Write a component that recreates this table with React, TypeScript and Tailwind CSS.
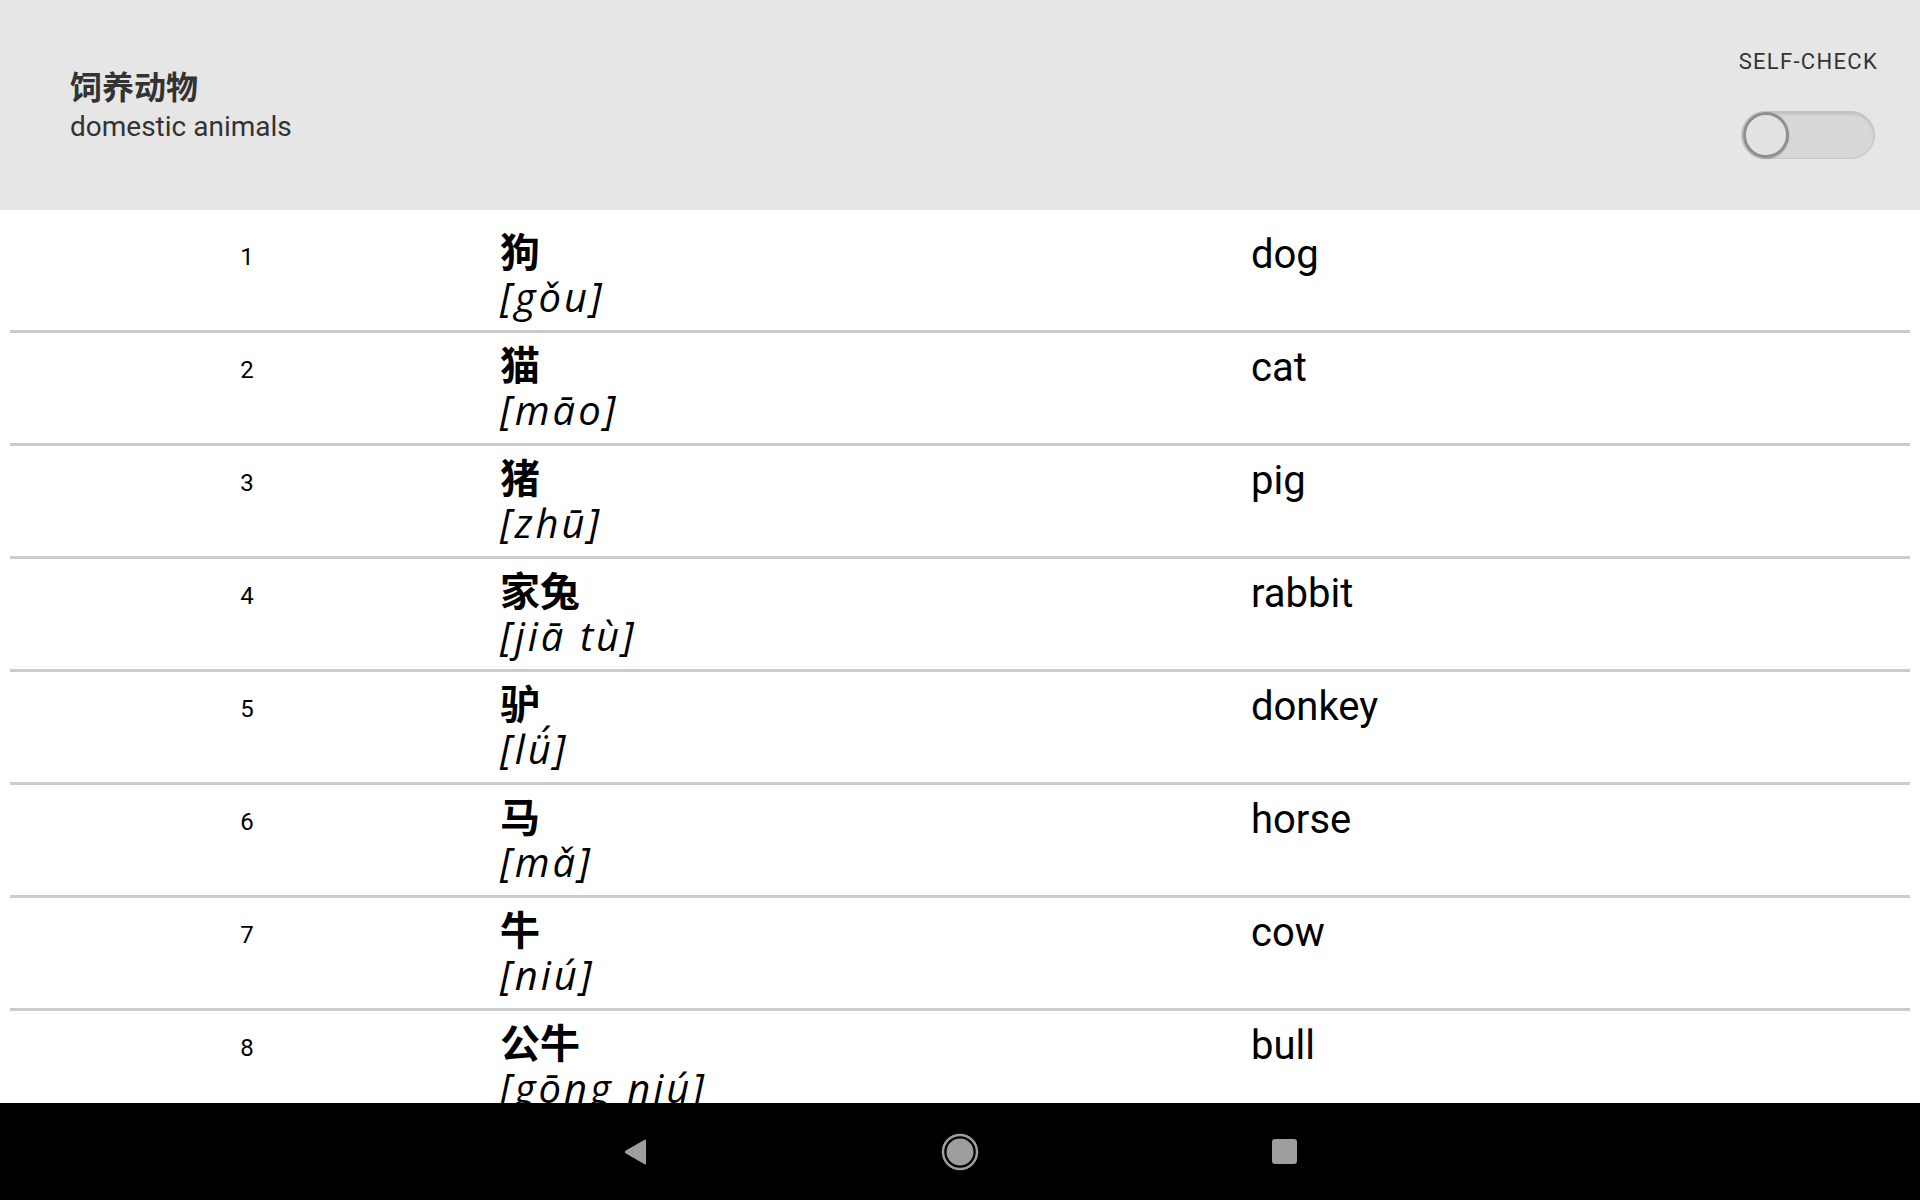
import React from 'react';

type Word = { hanzi: string; pinyin: string; english: string };

const words: Word[] = [
  { hanzi: '狗', pinyin: 'gǒu', english: 'dog' },
  { hanzi: '猫', pinyin: 'māo', english: 'cat' },
  { hanzi: '猪', pinyin: 'zhū', english: 'pig' },
  { hanzi: '家兔', pinyin: 'jiā tù', english: 'rabbit' },
  { hanzi: '驴', pinyin: 'lǘ', english: 'donkey' },
  { hanzi: '马', pinyin: 'mǎ', english: 'horse' },
  { hanzi: '牛', pinyin: 'niú', english: 'cow' },
  { hanzi: '公牛', pinyin: 'gōng niú', english: 'bull' },
];

const Toggle: React.FC = () => (
  <div className="w-[134px] h-[48px] rounded-full bg-[#d7d7d7] border border-[#c4c4c4] shadow-[inset_0_2px_3px_rgba(0,0,0,0.12)] flex items-center px-[1px]">
    <div className="w-[46px] h-[46px] rounded-full bg-[#e2e2e2] border-[3px] border-[#8f8f8f] shadow-[0_1px_2px_rgba(0,0,0,0.2)]" />
  </div>
);

const WordRow: React.FC<{ index: number; word: Word }> = ({ index, word }) => (
  <div className="border-b-[3px] border-[#cccccc]">
    <div className="grid grid-cols-[474px_751px_1fr] pt-[7px] pb-[9px]">
      <div className="text-center pt-[6px] text-[24px] leading-[48px] text-black font-['Roboto',sans-serif]">
        {index}
      </div>
      <div className="pl-[16px]">
        <div className="text-[40px] leading-[46px] font-bold text-black font-['Noto_Sans_CJK_SC',sans-serif]">
          {word.hanzi}
        </div>
        <div className="text-[40px] leading-[48px] italic tracking-[3px] text-black font-['Open_Sans','Noto_Sans',sans-serif]">
          [{word.pinyin}]
        </div>
      </div>
      <div className="pl-[16px] pt-[4px] text-[40px] leading-[48px] text-black font-['Roboto',sans-serif]">
        {word.english}
      </div>
    </div>
  </div>
);

export default function App() {
  return (
    <div className="h-screen w-full flex flex-col bg-white overflow-hidden">
      {/* Header */}
      <div className="h-[210px] shrink-0 bg-[#e6e6e6] flex justify-between pl-[70px] pr-[42px]">
        <div className="flex flex-col justify-center">
          <div className="text-[32px] leading-[44px] font-bold text-[#333333] font-['Noto_Sans_CJK_SC',sans-serif]">
            饲养动物
          </div>
          <div className="text-[28px] leading-[40px] text-[#333333] font-['Roboto',sans-serif]">
            domestic animals
          </div>
        </div>
        <div className="flex flex-col items-center pt-[49px] gap-[36px]">
          <div className="text-[22px] leading-[26px] tracking-[1.3px] text-[#333333] font-['Roboto',sans-serif]">
            SELF-CHECK
          </div>
          <Toggle />
        </div>
      </div>

      {/* Word list */}
      <div className="flex-1 overflow-hidden pt-[10px] px-[10px]">
        {words.map((w, i) => (
          <WordRow key={w.hanzi} index={i + 1} word={w} />
        ))}
      </div>

      {/* Android nav bar */}
      <div className="h-[97px] shrink-0 bg-black flex items-center justify-center gap-[276px]">
        <div className="w-[48px] h-[48px] flex items-center justify-center">
          <svg width="26" height="28" viewBox="0 0 26 28">
            <path d="M23 2.5 L23 25.5 Q23 27 21.6 26.2 L2.5 15.2 Q1 14 2.5 12.8 L21.6 1.8 Q23 1 23 2.5 Z" fill="#9e9e9e" />
          </svg>
        </div>
        <div className="w-[48px] h-[48px] flex items-center justify-center">
          <svg width="38" height="38" viewBox="0 0 38 38">
            <circle cx="19" cy="19" r="17" fill="none" stroke="#9e9e9e" strokeWidth="2.5" />
            <circle cx="19" cy="19" r="13.5" fill="#9e9e9e" />
          </svg>
        </div>
        <div className="w-[48px] h-[48px] flex items-center justify-center">
          <div className="w-[25px] h-[25px] rounded-[3px] bg-[#9e9e9e]" />
        </div>
      </div>
    </div>
  );
}
